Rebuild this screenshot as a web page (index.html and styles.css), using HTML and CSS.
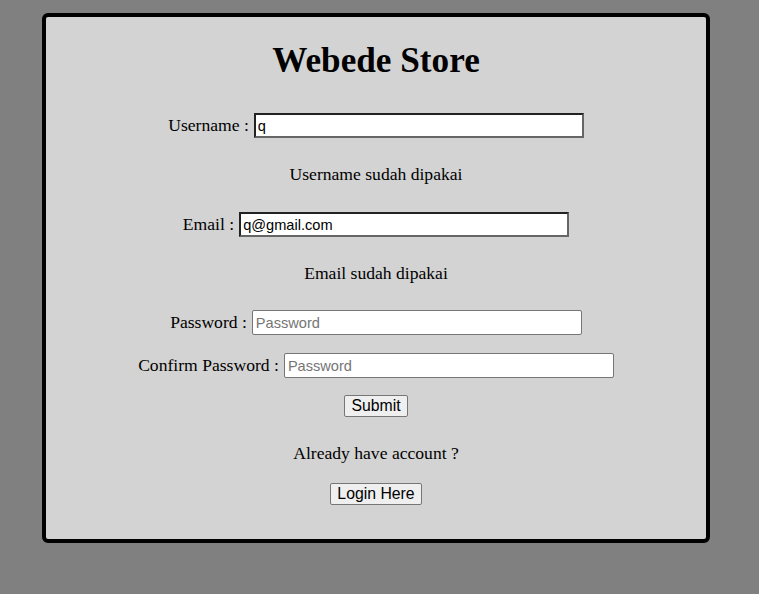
FILE: index.html
```html
<!doctype html>
<html>
<head>
<meta charset="utf-8">
<title>Register - Webede Store</title>
<link rel="stylesheet" href="styles.css">
</head>

<body>
<div class="box">
	<h1 class="title">Webede Store</h1>
	<form class="form" action="#">
		<div class="row row-user">
			<label for="username">Username :</label>
			<input class="field field-error" type="text" id="username" value="q">
		</div>
		<p class="msg msg-user">Username sudah dipakai</p>
		<div class="row row-email">
			<label for="email">Email :</label>
			<input class="field field-error" type="text" id="email" value="q@gmail.com">
		</div>
		<p class="msg msg-email">Email sudah dipakai</p>
		<div class="row row-pass">
			<label for="password">Password :</label>
			<input class="field" type="password" id="password" placeholder="Password">
		</div>
		<div class="row row-confirm">
			<label for="confirm">Confirm Password :</label>
			<input class="field" type="password" id="confirm" placeholder="Password">
		</div>
		<button class="btn btn-submit" type="button">Submit</button>
	</form>
	<p class="msg msg-login">Already have account ?</p>
	<button class="btn btn-login" type="button">Login Here</button>
</div>
</body>
</html>
```

FILE: styles.css
```css
*{margin:0; padding:0; box-sizing:border-box;}
html,body{background:#808080;}
body{font-family:"Liberation Serif","Times New Roman",serif; font-size:17.6px; color:#000;}

.box{width:668px; margin:13px 0 0 42px; padding-bottom:34px; background:#d3d3d3; border:4px solid #000; border-radius:6px; display:flex; flex-direction:column; align-items:center;}
.title{font-size:35.2px; font-weight:bold; line-height:40px; margin-top:24px;}

.form{display:flex; flex-direction:column; align-items:center;}
.row{display:flex; align-items:center; gap:5px; height:25px; line-height:20px;}
.row label{padding-bottom:2px;}
.row-user{margin-top:32px;}
.row-email{margin-top:28px;}
.row-pass{margin-top:27px;}
.row-confirm{margin-top:18px;}

.field{width:330px; height:25px; padding:1px 3px; font-family:"Liberation Sans",Arial,sans-serif; font-size:14.6px; color:#000; background:#fff; border:1px solid #767676; border-radius:2px; outline:none;}
.field::placeholder{color:#757575;}
.field-error{border:2px solid; border-color:#222 #666 #666 #222; border-radius:0; padding:0 2px;}

.msg{line-height:20px; text-align:center;}
.msg-user{margin-top:26px;}
.msg-email{margin-top:26px;}
.msg-login{margin-top:26px;}

.btn{height:22px; padding:0 6px; font-family:"Liberation Sans",Arial,sans-serif; font-size:15.8px; line-height:18px; color:#000; background:#efefef; border:1px solid #767676; border-radius:2px;}
.btn-submit{margin-top:17px;}
.btn-login{margin-top:20px;}
```
